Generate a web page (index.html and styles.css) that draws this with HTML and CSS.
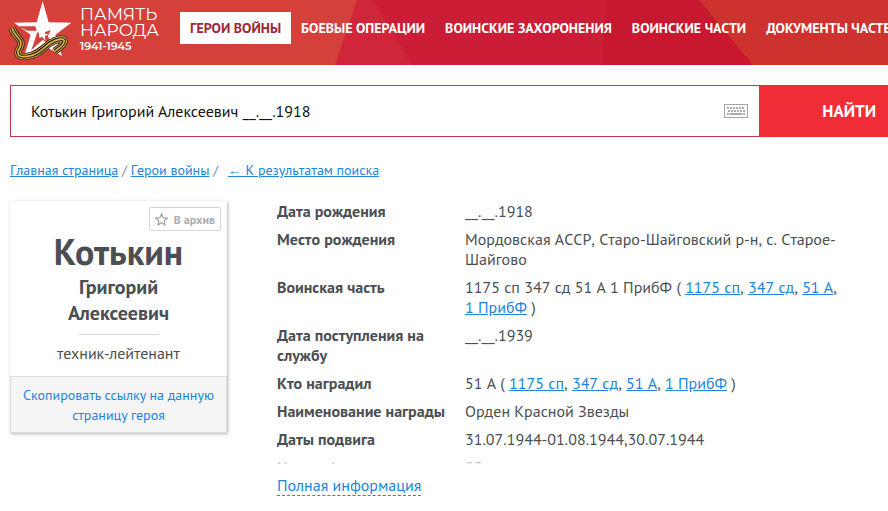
FILE: index.html
```html
<!DOCTYPE html>
<html lang="ru">
<head>
    <meta charset="UTF-8">
    <title>Память народа</title>
    <link rel="stylesheet" href="styles.css">
</head>
<body>
    <header class="header">
        <svg class="header-bg" viewBox="0 0 888 65" preserveAspectRatio="xMinYMin slice" aria-hidden="true">
            <rect width="888" height="65" fill="#d5403a"/>
            <polygon points="357,0 888,0 888,65 335,65" fill="#cf2639"/>
            <polygon points="373,0 888,0 888,65 412,65" fill="#cc1d36"/>
            <polygon points="606,0 888,0 888,65 602,65" fill="#c8182f"/>
            <polygon points="699,0 888,0 888,65 753,65" fill="#ce322e"/>
        </svg>
        <a href="#" class="logo">
            <svg class="logo-star" width="60" height="62" viewBox="0 0 180 186" aria-hidden="true">
                <path fill="#fff" d="M92 4 L110 67 L178 68 L130 104 L150 168 L92 134 L36 170 L56 104 L6 68 L74 67 Z"/>
                <path fill="#d5403a" d="M0 79 L70 79 L74 92 L46 92 L30 84 Z"/>
                <path fill="#d5403a" d="M76 97 L90 100 L116 90 L108 108 L118 136 L92 120 L58 150 Z"/>
                <path fill="#fff" d="M80 92 L98 84 L99 102 L110 103 L98 109 L101 122 L90 110 L82 114 Z"/>
                <g fill="none">
                    <path stroke="#2b2216" stroke-width="22" d="M0 84 C8 112 36 118 24 142 C8 166 24 176 60 166 C98 154 94 136 128 122 C158 110 174 122 128 154"/>
                    <path stroke="#e4b648" stroke-width="17" d="M0 84 C8 112 36 118 24 142 C8 166 24 176 60 166 C98 154 94 136 128 122 C158 110 174 122 128 154"/>
                    <path stroke="#2b2216" stroke-width="12" d="M0 84 C8 112 36 118 24 142 C8 166 24 176 60 166 C98 154 94 136 128 122 C158 110 174 122 128 154"/>
                    <path stroke="#e4b648" stroke-width="5" d="M0 84 C8 112 36 118 24 142 C8 166 24 176 60 166 C98 154 94 136 128 122 C158 110 174 122 128 154"/>
                </g>
            </svg>
            <span class="logo-text">ПАМЯТЬ<br>НАРОДА<small>1941-1945</small></span>
        </a>
        <nav class="nav">
            <a href="#" class="active">ГЕРОИ ВОЙНЫ</a>
            <a href="#">БОЕВЫЕ ОПЕРАЦИИ</a>
            <a href="#">ВОИНСКИЕ ЗАХОРОНЕНИЯ</a>
            <a href="#">ВОИНСКИЕ ЧАСТИ</a>
            <a href="#">ДОКУМЕНТЫ ЧАСТЕЙ</a>
        </nav>
    </header>

    <form class="search">
        <div class="search-field">
            <input type="text" aria-label="Поиск" value="Котькин Григорий Алексеевич __.__.1918">
            <svg width="24" height="14" viewBox="0 0 24 14" aria-hidden="true">
                <rect x="0.5" y="0.5" width="23" height="13" fill="#fff" stroke="#a5a5a5"/>
                <path stroke="#aaa" stroke-width="2" stroke-dasharray="2 1" d="M3 4H21M4 7H21"/>
                <path stroke="#aaa" stroke-width="2" d="M3 10H5M6 10H18M19 10H21"/>
            </svg>
        </div>
        <button type="submit">НАЙТИ</button>
    </form>

    <div class="breadcrumbs">
        <a href="#">Главная страница</a> / <a href="#">Герои войны</a> / <a href="#" class="back">← К результатам поиска</a>
    </div>

    <main class="content">
        <aside class="card">
            <div class="card-body">
                <button type="button" class="archive-btn">
                    <svg width="13" height="13" viewBox="0 0 12 12" aria-hidden="true">
                        <path fill="none" stroke="#999" d="M6 1 L7.500 4.400 L11.300 4.700 L8.500 7.200 L9.300 11 L6 9 L2.700 11 L3.500 7.200 L0.700 4.700 L4.500 4.400 Z"/>
                    </svg>
                    В архив
                </button>
                <h1>Котькин</h1>
                <h2>Григорий<br>Алексеевич</h2>
                <p class="rank">техник-лейтенант</p>
            </div>
            <a href="#" class="copy-link">Скопировать ссылку на данную страницу героя</a>
        </aside>

        <section class="details">
            <div class="details-clip">
                <table>
                    <tr>
                        <th>Дата рождения</th>
                        <td>__.__.1918</td>
                    </tr>
                    <tr>
                        <th>Место рождения</th>
                        <td>Мордовская АССР, Старо-Шайговский р-н, с. Старое-Шайгово</td>
                    </tr>
                    <tr>
                        <th>Воинская часть</th>
                        <td>1175 сп 347 сд 51 А 1 ПрибФ ( <a href="#">1175 сп</a>, <a href="#">347 сд</a>, <a href="#">51 А</a>, <a href="#">1 ПрибФ</a> )</td>
                    </tr>
                    <tr>
                        <th>Дата поступления на службу</th>
                        <td>__.__.1939</td>
                    </tr>
                    <tr>
                        <th>Кто наградил</th>
                        <td>51 А ( <a href="#">1175 сп</a>, <a href="#">347 сд</a>, <a href="#">51 А</a>, <a href="#">1 ПрибФ</a> )</td>
                    </tr>
                    <tr>
                        <th>Наименование награды</th>
                        <td>Орден Красной Звезды</td>
                    </tr>
                    <tr>
                        <th>Даты подвига</th>
                        <td>31.07.1944-01.08.1944,30.07.1944</td>
                    </tr>
                    <tr>
                        <th>Номер фонда</th>
                        <td>33</td>
                    </tr>
                </table>
            </div>
            <a href="#" class="full-info">Полная информация</a>
        </section>
    </main>
</body>
</html>
```

FILE: styles.css
```css
* {
    box-sizing: border-box;
}
body {
    font-family: "PT Sans", "Noto Sans", sans-serif;
    font-size: 16px;
    line-height: 20px;
    color: #4b4f53;
    background-color: #fff;
    margin: 0;
    overflow-x: hidden;
}
a {
    color: #2185e0;
}
.header {
    position: relative;
    display: flex;
    align-items: flex-start;
    height: 65px;
    padding-left: 12px;
    overflow: hidden;
}
.header-bg {
    position: absolute;
    top: 0;
    left: 0;
    width: 100%;
    height: 100%;
}
.logo {
    position: relative;
    display: flex;
    flex: none;
    width: 168px;
    gap: 8px;
    color: #fff;
    text-decoration: none;
}
.logo-star {
    overflow: visible;
}
.logo-text {
    padding-top: 6px;
    font-family: Montserrat, Lato, sans-serif;
    font-size: 17px;
    line-height: 16px;
}
.logo-text small {
    display: block;
    font-size: 11px;
    font-weight: 600;
}
.nav {
    position: relative;
    display: flex;
    flex: none;
    padding-top: 12px;
}
.nav a {
    padding: 0 10px;
    color: #fff;
    font-size: 14px;
    font-weight: bold;
    line-height: 32px;
    text-decoration: none;
    white-space: nowrap;
}
.nav a.active {
    background-color: #fff;
    color: #a02632;
}
.search {
    display: flex;
    height: 52px;
    margin: 20px 0 0 10px;
}
.search-field {
    display: flex;
    flex: 1;
    align-items: center;
    padding: 0 11px 0 20px;
    border: 1px solid #c23a48;
    border-right: 0;
}
.search input {
    flex: 1;
    padding: 0;
    border: 0;
    outline: 0;
    color: #111;
    font: inherit;
}
.search button {
    width: 129px;
    padding: 0 12px 0 0;
    border: 0;
    background-color: #f02d37;
    color: #fff;
    font-family: inherit;
    font-size: 17px;
    font-weight: bold;
    text-align: right;
}
.breadcrumbs {
    margin: 23px 10px 0;
    font-size: 14px;
    font-kerning: none;
    color: #7c93aa;
}
.breadcrumbs .back {
    margin-left: 6px;
}
.content {
    display: flex;
    align-items: flex-start;
    gap: 50px;
    margin-top: 17px;
    padding: 0 43px 0 10px;
}
.card {
    flex: none;
    width: 217px;
    margin-top: 4px;
    box-shadow: 1px 1px 3px rgba(0, 0, 0, 0.3);
    text-align: center;
}
.card-body {
    position: relative;
    padding: 28px 10px 13px;
}
.archive-btn {
    position: absolute;
    top: 6px;
    right: 6px;
    display: flex;
    align-items: center;
    gap: 6px;
    height: 24px;
    padding: 0 5px;
    border: 1px solid #d5d7d9;
    border-radius: 2px;
    background-color: #fff;
    color: #aaadb0;
    font-family: inherit;
    font-size: 12px;
    font-weight: bold;
}
.card h1 {
    margin: 0;
    font-size: 36px;
    line-height: 45px;
}
.card h2 {
    margin: 0;
    font-size: 20px;
    line-height: 26px;
}
.rank {
    margin: 0;
}
.rank::before {
    content: "";
    display: block;
    width: 80px;
    margin: 8px auto;
    border-top: 1px solid #d5d7d9;
}
.copy-link {
    display: block;
    padding: 8px 8px 7px;
    border: 1px solid #dcdddf;
    background-color: #f5f5f5;
    font-size: 14px;
    text-decoration: none;
}
.details {
    flex: 1;
}
.details-clip {
    position: relative;
    height: 267px;
    overflow: hidden;
}
.details-clip::after {
    content: "";
    position: absolute;
    right: 0;
    bottom: 0;
    left: 0;
    height: 10px;
    background: linear-gradient(rgba(255, 255, 255, 0.3), rgba(255, 255, 255, 0.8));
}
table {
    width: 100%;
    border-spacing: 0;
    font-kerning: none;
}
th, td {
    padding: 4px 0;
    text-align: left;
    vertical-align: top;
}
th {
    width: 188px;
    padding-right: 16px;
}
td a {
    white-space: nowrap;
}
.full-info {
    display: inline-block;
    margin-top: 11px;
    border-bottom: 1px dashed #2185e0;
    text-decoration: none;
}
```
